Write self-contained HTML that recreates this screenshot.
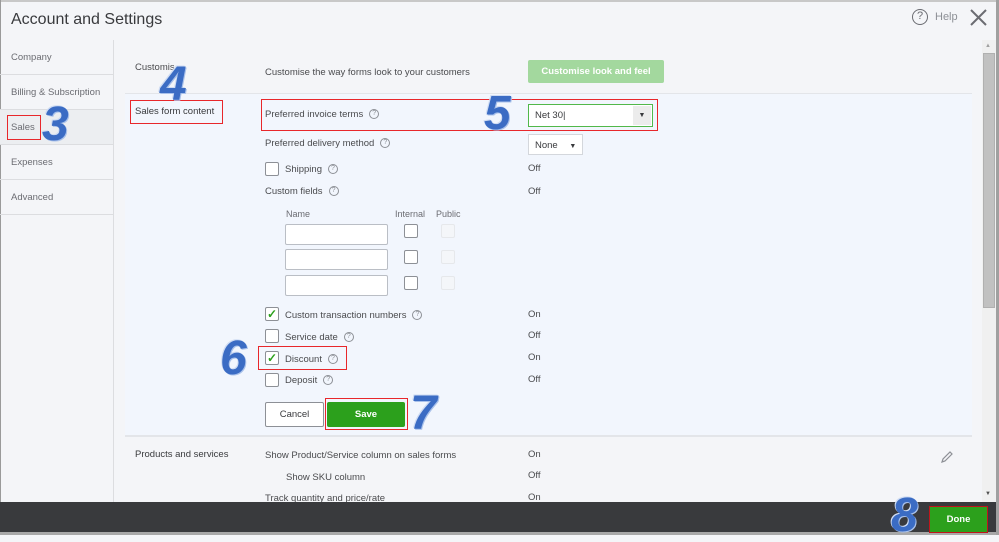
<!DOCTYPE html>
<html><head><meta charset="utf-8"><style>
*{margin:0;padding:0;box-sizing:border-box}
body{width:999px;height:535px;overflow:hidden;background:#f4f5f8;font-family:"Liberation Sans",sans-serif;color:#393a3d;position:relative}
.a{position:absolute;white-space:nowrap}
.t{font-size:9.5px;color:#4a4b4e}
.nav{position:absolute;left:0;width:113px;height:35px;border-bottom:1px solid #dcdde0;font-size:9.5px;color:#6b6c72;padding:12px 0 0 11px}
.cb{position:absolute;width:14px;height:14px;border:1px solid #8d9096;border-radius:2px;background:#fff}
.q{display:inline-block;width:10px;height:10px;border:1px solid #8d9096;border-radius:50%;font-size:7px;line-height:8px;text-align:center;color:#8d9096;margin-left:6px;vertical-align:middle}
.inp{position:absolute;width:103px;height:21px;background:#fff;border:1px solid #babec5;border-radius:2px}
.red{position:absolute;border:1px solid #e8272b}
.num{position:absolute;font-family:"Liberation Sans",sans-serif;font-weight:bold;font-style:italic;color:#3b6cc4;font-size:48px;line-height:1;text-shadow:1px 1px 0 #a9c1ea,-1px -1px 0 #cfdcf3}
.chk{color:#2ca01c;font-size:12px;line-height:12px;text-align:center;font-weight:bold}
</style></head><body>
<div class="a" style="left:0;top:0;width:999px;height:2px;background:#c8c8c8"></div>
<div class="a" style="left:0;top:0;width:1px;height:535px;background:#9a9a9a"></div>
<div class="a" style="left:11px;top:11px;font-size:16px;color:#393a3d">Account and Settings</div>
<div class="a" style="left:912px;top:9px;width:16px;height:16px;border:1.5px solid #6b6c72;border-radius:50%;font-size:11px;text-align:center;line-height:13px;color:#6b6c72">?</div>
<div class="a" style="left:935px;top:11px;font-size:11px;color:#8d9096">Help</div>
<svg class="a" style="left:970px;top:9px" width="17" height="17"><path d="M1 1L16 16M16 1L1 16" stroke="#6b6c72" stroke-width="2"/></svg>

<div class="a" style="left:113px;top:40px;width:1px;height:462px;background:#dcdde0"></div>
<div class="nav" style="top:40px;height:35px">Company</div>
<div class="nav" style="top:75px">Billing &amp; Subscription</div>
<div class="nav" style="top:110px;background:#eceef1">Sales</div>
<div class="nav" style="top:145px">Expenses</div>
<div class="nav" style="top:180px">Advanced</div>
<div class="red" style="left:7px;top:115px;width:34px;height:25px"></div>

<div class="a" style="left:125px;top:93px;width:847px;height:1px;background:#e3e5e9"></div>
<div class="a" style="left:125px;top:94px;width:847px;height:341px;background:#f2f6fd"></div>
<div class="a" style="left:125px;top:435px;width:847px;height:2px;background:#e3e5e9"></div>

<div class="a t" style="left:135px;top:62px">Customis</div>
<div class="a t" style="left:265px;top:67px">Customise the way forms look to your customers</div>
<div class="a" style="left:528px;top:60px;width:136px;height:23px;background:#a3d89e;border-radius:2px;color:#fff;font-size:9.5px;font-weight:bold;text-align:center;line-height:23px">Customise look and feel</div>

<div class="a t" style="left:135px;top:106px;color:#393a3d">Sales form content</div>
<div class="red" style="left:130px;top:100px;width:93px;height:24px"></div>
<div class="a t" style="left:265px;top:109px">Preferred invoice terms<span class="q">?</span></div>
<div class="red" style="left:261px;top:99px;width:397px;height:32px"></div>
<div class="a" style="left:528px;top:104px;width:125px;height:23px;background:#fff;border:1px solid #51b84a"><span style="position:absolute;left:6px;top:5px;font-size:9.5px">Net 30|</span><div style="position:absolute;right:1px;top:1px;width:18px;height:19px;background:#ececec;font-size:7px;text-align:center;line-height:19px">▼</div></div>
<div class="a t" style="left:265px;top:138px">Preferred delivery method<span class="q">?</span></div>
<div class="a" style="left:528px;top:134px;width:55px;height:21px;background:#fff;border:1px solid #d4d7dc;font-size:9.5px;padding:5px 0 0 6px">None <span style="font-size:7px;margin-left:9px">▼</span></div>
<div class="cb" style="left:265px;top:162px"></div>
<div class="a t" style="left:285px;top:164px">Shipping<span class="q">?</span></div>
<div class="a t" style="left:528px;top:163px">Off</div>
<div class="a t" style="left:265px;top:186px">Custom fields<span class="q">?</span></div>
<div class="a t" style="left:528px;top:186px">Off</div>
<div class="a" style="left:286px;top:209px;font-size:9px;color:#6b6c72">Name</div>
<div class="a" style="left:395px;top:209px;font-size:9px;color:#6b6c72">Internal</div>
<div class="a" style="left:436px;top:209px;font-size:9px;color:#6b6c72">Public</div>
<div class="inp" style="left:285px;top:224px"></div>
<div class="inp" style="left:285px;top:249px"></div>
<div class="inp" style="left:285px;top:275px"></div>
<div class="cb" style="left:404px;top:224px"></div><div class="cb" style="left:404px;top:250px"></div><div class="cb" style="left:404px;top:276px"></div>
<div class="cb" style="left:441px;top:224px;border-color:#e6e8eb;background:#f4f6f9"></div><div class="cb" style="left:441px;top:250px;border-color:#e6e8eb;background:#f4f6f9"></div><div class="cb" style="left:441px;top:276px;border-color:#e6e8eb;background:#f4f6f9"></div>

<div class="cb chk" style="left:265px;top:307px">✓</div>
<div class="a t" style="left:285px;top:310px">Custom transaction numbers<span class="q">?</span></div>
<div class="a t" style="left:528px;top:309px">On</div>
<div class="cb" style="left:265px;top:329px"></div>
<div class="a t" style="left:285px;top:332px">Service date<span class="q">?</span></div>
<div class="a t" style="left:528px;top:330px">Off</div>
<div class="cb chk" style="left:265px;top:351px">✓</div>
<div class="a t" style="left:285px;top:354px">Discount<span class="q">?</span></div>
<div class="red" style="left:258px;top:346px;width:89px;height:24px"></div>
<div class="a t" style="left:528px;top:352px">On</div>
<div class="cb" style="left:265px;top:373px"></div>
<div class="a t" style="left:285px;top:375px">Deposit<span class="q">?</span></div>
<div class="a t" style="left:528px;top:374px">Off</div>

<div class="a" style="left:265px;top:402px;width:59px;height:25px;background:#fff;border:1px solid #8d9096;border-radius:2px;font-size:9.5px;text-align:center;line-height:23px">Cancel</div>
<div class="a" style="left:327px;top:402px;width:78px;height:25px;background:#2ca01c;border-radius:2px;color:#fff;font-size:9.5px;font-weight:bold;text-align:center;line-height:25px">Save</div>
<div class="red" style="left:325px;top:398px;width:83px;height:32px"></div>

<div class="a t" style="left:135px;top:449px;color:#393a3d">Products and services</div>
<div class="a t" style="left:265px;top:450px">Show Product/Service column on sales forms</div>
<div class="a t" style="left:528px;top:449px">On</div>
<div class="a t" style="left:286px;top:472px">Show SKU column</div>
<div class="a t" style="left:528px;top:470px">Off</div>
<div class="a t" style="left:265px;top:493px">Track quantity and price/rate</div>
<div class="a t" style="left:528px;top:492px">On</div>
<svg class="a" style="left:940px;top:450px" width="14" height="14"><path d="M2 12L3 9L10 2L12 4L5 11Z" fill="none" stroke="#8d9096" stroke-width="1.2"/></svg>

<div class="a" style="left:982px;top:40px;width:14px;height:462px;background:#f0f0f0"></div>
<div class="a" style="left:983px;top:53px;width:12px;height:255px;background:#c1c1c1;border:1px solid #b0b0b0"></div>
<div class="a" style="left:985px;top:43px;font-size:6px;color:#a0a0a0">▲</div>
<div class="a" style="left:985px;top:491px;font-size:6px;color:#505050">▼</div>
<div class="a" style="left:996px;top:0;width:3px;height:535px;background:#a0a0a0"></div>

<div class="a" style="left:0;top:502px;width:996px;height:30px;background:#393a3d"></div>
<div class="a" style="left:0;top:532px;width:996px;height:3px;background:#a8a8a8"></div>
<div class="a" style="left:929px;top:506px;width:59px;height:27px;border:1px solid #c0151b;background:#2ca01c;color:#fff;font-size:9.5px;font-weight:bold;text-align:center;line-height:25px">Done</div>

<div class="num" style="left:160px;top:61px">4</div>
<div class="num" style="left:42px;top:101px">3</div>
<div class="num" style="left:484px;top:90px">5</div>
<div class="num" style="left:220px;top:335px">6</div>
<div class="num" style="left:410px;top:390px">7</div>
<div class="num" style="left:891px;top:492px">8</div>
</body></html>
